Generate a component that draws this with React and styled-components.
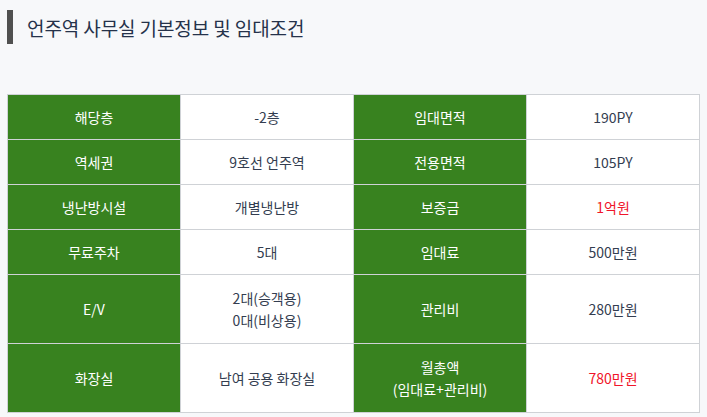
import React from "react";
import styled, { createGlobalStyle } from "styled-components";

const Global = createGlobalStyle`
  html, body { margin: 0; padding: 0; background: #f7f8fa; }
  body { font-family: "Noto Sans CJK KR", "Noto Sans", sans-serif; }
`;

const Page = styled.div`
  padding: 10px 7px 0 7px;
  width: 693px;
`;

const Title = styled.h2`
  margin: 0;
  height: 34px;
  display: flex;
  align-items: center;
  border-left: 6px solid #505050;
  padding-left: 14px;
  font-size: 19px;
  font-weight: 400;
  color: #25324a;
  letter-spacing: -0.1px;
`;

const Table = styled.table`
  margin-top: 50px;
  width: 693px;
  border-collapse: collapse;
  table-layout: fixed;
  border: 1px solid #cfd2d6;
`;

const Cell = styled.td`
  border: 1px solid #cfd2d6;
  text-align: center;
  vertical-align: middle;
  font-size: 14px;
  line-height: 22px;
  padding: 11px 4px;
  background: ${(p) => (p.$head ? "#38821f" : "#ffffff")};
  color: ${(p) => (p.$head ? "#ffffff" : p.$red ? "#f0152a" : "#333d50")};
  ${(p) => p.$tall && "padding-top: 12px; padding-bottom: 12px;"}
`;

const rows = [
  ["해당층", "-2층", "임대면적", "190PY"],
  ["역세권", "9호선 언주역", "전용면적", "105PY"],
  ["냉난방시설", "개별냉난방", "보증금", "1억원", true],
  ["무료주차", "5대", "임대료", "500만원"],
  ["E/V", ["2대(승객용)", "0대(비상용)"], "관리비", "280만원"],
  ["화장실", "남여 공용 화장실", ["월총액", "(임대료+관리비)"], "780만원", true],
];

const Lines = ({ v }) =>
  Array.isArray(v) ? (
    <>
      {v.map((t, i) => (
        <div key={i}>{t}</div>
      ))}
    </>
  ) : (
    v
  );

export default function App() {
  return (
    <>
      <Global />
      <Page>
        <Title>언주역 사무실 기본정보 및 임대조건</Title>
        <Table>
          <tbody>
            {rows.map((r, i) => {
              const tall = Array.isArray(r[1]) || Array.isArray(r[2]);
              return (
                <tr key={i}>
                  <Cell $head $tall={tall}><Lines v={r[0]} /></Cell>
                  <Cell $tall={tall}><Lines v={r[1]} /></Cell>
                  <Cell $head $tall={tall}><Lines v={r[2]} /></Cell>
                  <Cell $red={r[4]} $tall={tall}><Lines v={r[3]} /></Cell>
                </tr>
              );
            })}
          </tbody>
        </Table>
      </Page>
    </>
  );
}
